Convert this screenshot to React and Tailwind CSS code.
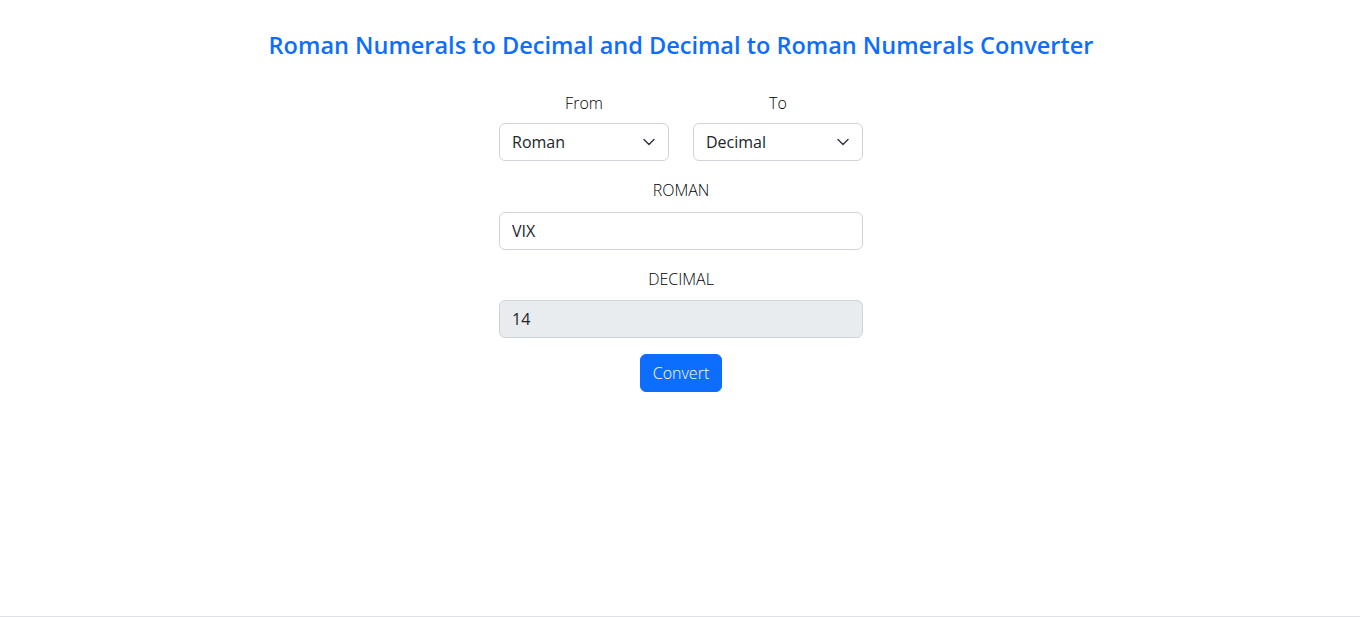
import { useState } from 'react'

function toDecimal(roman) {
  const map = { I: 1, V: 5, X: 10, L: 50, C: 100, D: 500, M: 1000 }
  let total = 0
  const s = roman.toUpperCase()
  for (let i = 0; i < s.length; i++) {
    const cur = map[s[i]] || 0
    const next = map[s[i + 1]] || 0
    total += cur < next ? -cur : cur
  }
  return total
}

function Chevron() {
  return (
    <svg
      className="pointer-events-none absolute right-[14px] top-1/2 -translate-y-1/2"
      width="12"
      height="8"
      viewBox="0 0 12 8"
      fill="none"
      stroke="#343a40"
      strokeWidth="1.5"
      strokeLinecap="round"
      strokeLinejoin="round"
    >
      <path d="M1 1.5l5 5 5-5" />
    </svg>
  )
}

export default function App() {
  const [from, setFrom] = useState('Roman')
  const [to, setTo] = useState('Decimal')
  const [roman, setRoman] = useState('VIX')
  const [decimal, setDecimal] = useState('14')

  const convert = () => {
    setDecimal(String(toDecimal(roman)))
  }

  return (
    <div className="bg-white text-[#212529] font-['Open_Sans','Noto_Sans',sans-serif]">
      <main className="h-[616px] pt-[30px] pl-[2px] text-center">
        <h4 className="text-[23.5px] leading-[30px] font-semibold text-[#0d6efd]">
          Roman Numerals to Decimal and Decimal to Roman Numerals Converter
        </h4>

        <div className="mx-auto mt-[31px] w-[364px]">
          {/* From / To */}
          <div className="flex gap-6">
            <div className="w-[170px]">
              <label className="block h-6 text-[16px] leading-6 font-light text-black mb-2">From</label>
              <div className="relative">
                <select
                  value={from}
                  onChange={(e) => setFrom(e.target.value)}
                  className="block w-full h-[38px] appearance-none rounded-md border border-[#ced4da] bg-white pl-3 pr-9 text-[16px] leading-6 text-left outline-none"
                >
                  <option>Roman</option>
                  <option>Decimal</option>
                </select>
                <Chevron />
              </div>
            </div>
            <div className="w-[170px]">
              <label className="block h-6 text-[16px] leading-6 font-light text-black mb-2">To</label>
              <div className="relative">
                <select
                  value={to}
                  onChange={(e) => setTo(e.target.value)}
                  className="block w-full h-[38px] appearance-none rounded-md border border-[#ced4da] bg-white pl-3 pr-9 text-[16px] leading-6 text-left outline-none"
                >
                  <option>Decimal</option>
                  <option>Roman</option>
                </select>
                <Chevron />
              </div>
            </div>
          </div>

          {/* Roman input */}
          <label className="block h-6 mt-[17px] mb-[10px] text-[16px] leading-6 font-light text-black">ROMAN</label>
          <input
            value={roman}
            onChange={(e) => setRoman(e.target.value)}
            className="block w-full h-[38px] rounded-md border border-[#ced4da] bg-white px-3 text-[16px] outline-none"
          />

          {/* Decimal output */}
          <label className="block h-6 mt-[17px] mb-[9px] text-[16px] leading-6 font-light text-black">DECIMAL</label>
          <input
            value={decimal}
            readOnly
            className="block w-full h-[38px] rounded-md border border-[#ced4da] bg-[#e9ecef] px-3 text-[16px] outline-none"
          />

          <button
            onClick={convert}
            className="mt-4 h-[38px] rounded-md border border-[#0d6efd] bg-[#0d6efd] px-3 text-[16px] font-light text-white"
          >
            Convert
          </button>
        </div>
      </main>
      <footer className="border-t border-[#dee2e6] h-px" />
    </div>
  )
}
